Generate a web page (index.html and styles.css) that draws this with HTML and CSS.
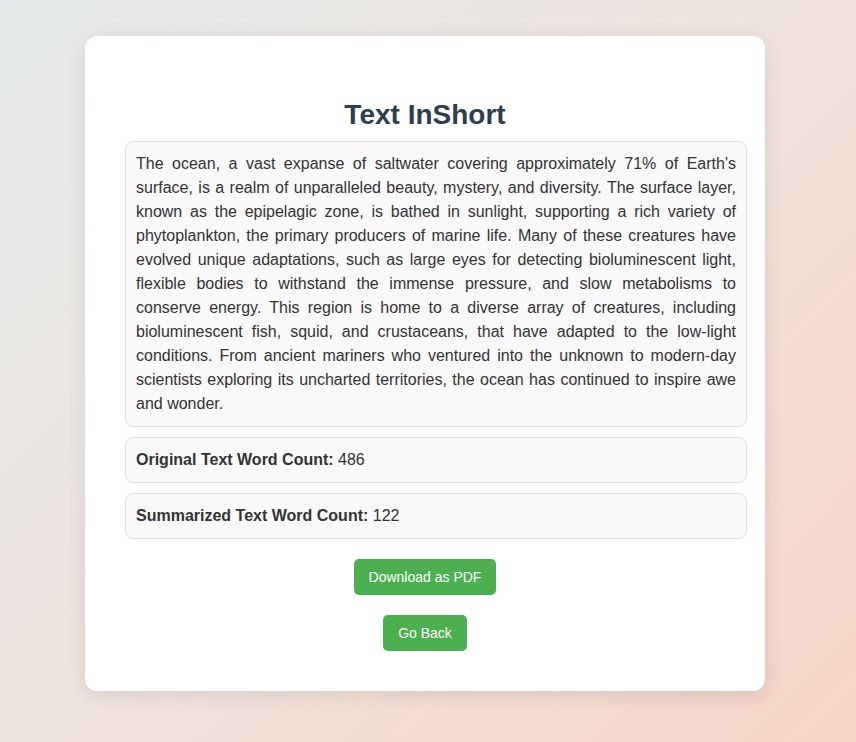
FILE: index.html
```html
<!DOCTYPE html>
<html lang="en">
<head>
<meta charset="utf-8">
<title>Text InShort</title>
<link rel="stylesheet" href="styles.css">
</head>
<body>
<main class="card">
  <h1 class="title">Text InShort</h1>
  <div class="box summary">The ocean, a vast expanse of saltwater covering approximately 71% of Earth's surface, is a realm of unparalleled beauty, mystery, and diversity. The surface layer, known as the epipelagic zone, is bathed in sunlight, supporting a rich variety of phytoplankton, the primary producers of marine life. Many of these creatures have evolved unique adaptations, such as large eyes for detecting bioluminescent light, flexible bodies to withstand the immense pressure, and slow metabolisms to conserve energy. This region is home to a diverse array of creatures, including bioluminescent fish, squid, and crustaceans, that have adapted to the low-light conditions. From ancient mariners who ventured into the unknown to modern-day scientists exploring its uncharted territories, the ocean has continued to inspire awe and wonder.</div>
  <div class="box count"><strong>Original Text Word Count:</strong> 486</div>
  <div class="box count"><strong>Summarized Text Word Count:</strong> 122</div>
  <div class="actions">
    <button class="btn" type="button">Download as PDF</button>
    <button class="btn" type="button">Go Back</button>
  </div>
</main>
</body>
</html>
```
FILE: styles.css
```css
html, body {
  margin: 0;
  height: 100%;
}
body {
  font-family: "Liberation Sans", Arial, sans-serif;
  background: linear-gradient(135deg, #e5ebea 0%, #efe3de 50%, #f7d3c5 100%);
  display: flex;
  justify-content: center;
  align-items: flex-start;
  padding: 36px 6px 0 0;
  box-sizing: border-box;
  color: #333;
}
.card {
  width: 600px;
  padding: 40px;
  background: #fff;
  border-radius: 12px;
  box-shadow: 0 4px 20px rgba(0, 0, 0, 0.1);
}
.title {
  margin: 23px 0 10px;
  font-size: 28px;
  line-height: 32px;
  font-weight: bold;
  text-align: center;
  color: #2c3e50;
}
.box {
  width: 100%;
  padding: 10px;
  border: 1px solid #ddd;
  border-radius: 8px;
  background: #f9f9f9;
  font-size: 16px;
  line-height: 24px;
  color: #333;
  margin-bottom: 10px;
}
.summary {
  text-align: justify;
}
.actions {
  display: flex;
  flex-direction: column;
  align-items: center;
  gap: 20px;
  padding-top: 10px;
}
.btn {
  font-family: "Liberation Sans", Arial, sans-serif;
  font-size: 14px;
  line-height: 16px;
  padding: 10px 15px;
  border: none;
  border-radius: 5px;
  background: #4caf50;
  color: #fff;
  cursor: pointer;
}
```
